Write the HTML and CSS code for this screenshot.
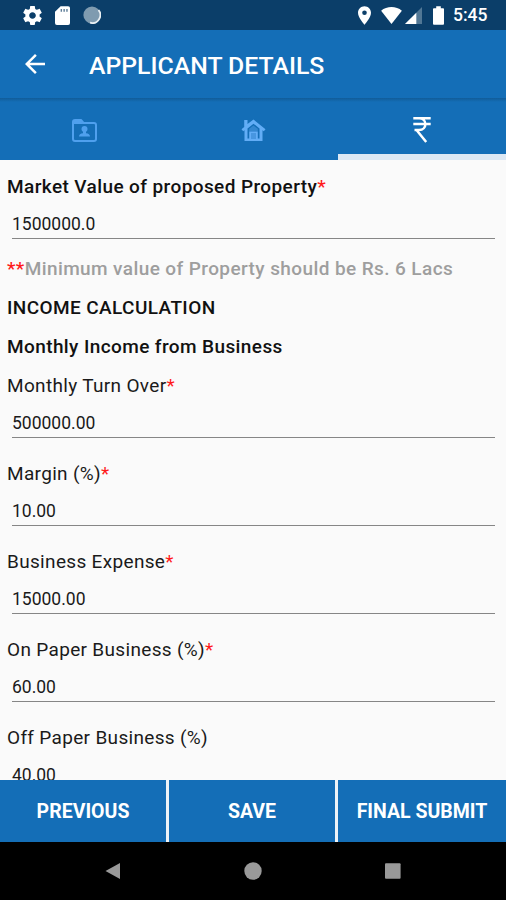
FILE: index.html
```html
<!DOCTYPE html>
<html lang="en">
<head>
  <meta charset="UTF-8" />
  <meta name="viewport" content="width=device-width, initial-scale=1.0"/>
  <title>Applicant Details</title>
  <link rel="stylesheet" href="styles.css">
</head>
<body>
  <div class="status-bar">
    <div class="status-left">
      <svg class="icon-gear" viewBox="2 2 20 20"><path fill="#fff" d="M19.43 12.98c.04-.32.07-.64.07-.98s-.03-.66-.07-.98l2.11-1.65c.19-.15.24-.42.12-.64l-2-3.46c-.12-.22-.39-.3-.61-.22l-2.49 1c-.52-.4-1.08-.73-1.69-.98l-.38-2.65C14.46 2.18 14.25 2 14 2h-4c-.25 0-.46.18-.49.42l-.38 2.65c-.61.25-1.17.59-1.69.98l-2.49-1c-.23-.09-.49 0-.61.22l-2 3.46c-.13.22-.07.49.12.64l2.11 1.65c-.04.32-.07.65-.07.98s.03.66.07.98l-2.11 1.65c-.19.15-.24.42-.12.64l2 3.46c.12.22.39.3.61.22l2.49-1c.52.4 1.08.73 1.69.98l.38 2.65c.03.24.24.42.49.42h4c.25 0 .46-.18.49-.42l.38-2.65c.61-.25 1.17-.59 1.69-.98l2.49 1c.23.09.49 0 .61-.22l2-3.46c.12-.22.07-.49-.12-.64l-2.11-1.65zM12 15.5c-1.93 0-3.5-1.57-3.5-3.5s1.57-3.5 3.5-3.5 3.5 1.57 3.5 3.5-1.57 3.5-3.5 3.5z"/></svg>
      <svg class="icon-sd" viewBox="0 0 16 20"><path fill="#fff" d="M6 0h8a2 2 0 0 1 2 2v16a2 2 0 0 1-2 2H2a2 2 0 0 1-2-2V6z"/><path fill="#5d7d98" d="M6 3h1.500v3H6zM9 3h1.500v3H9zM12 3h1.500v3H12z"/></svg>
      <svg class="icon-sync" viewBox="0 0 18 18"><circle cx="9" cy="9" r="8.600" fill="#7f9bb0"/><path d="M15.500 4a8 8 0 0 1-8.500 12.700" fill="none" stroke="#e9eff3" stroke-width="1.800"/></svg>
    </div>
    <div class="status-right">
      <svg class="icon-pin" viewBox="5 2 14 20"><path fill="#fff" d="M12 2C8.130 2 5 5.130 5 9c0 5.250 7 13 7 13s7-7.750 7-13c0-3.870-3.130-7-7-7zm0 9.500a2.500 2.500 0 0 1 0-5 2.500 2.500 0 0 1 0 5z"/></svg>
      <svg class="icon-wifi" viewBox="0 0 22 18"><path fill="#fff" d="M0 4C6-1.300 16-1.300 22 4L11 18z"/></svg>
      <svg class="icon-signal" viewBox="0 0 18 18"><path fill="#517795" d="M18 0v18H0z"/><path fill="#fff" d="M12 6v12H0z"/></svg>
      <svg class="icon-battery" viewBox="0 0 12 20"><path fill="#fff" d="M3.500 0h5v2H11a1 1 0 0 1 1 1v16a1 1 0 0 1-1 1H1a1 1 0 0 1-1-1V3a1 1 0 0 1 1-1h2.500z"/></svg>
      <span class="clock">5:45</span>
    </div>
  </div>

  <div class="header">
    <svg class="icon-back" viewBox="4 4 16 16"><path fill="#fff" d="M20 11H7.830l5.590-5.590L12 4l-8 8 8 8 1.410-1.410L7.830 13H20v-2z"/></svg>
    <h1 class="title">APPLICANT DETAILS</h1>
  </div>

  <div class="tabs">
    <div class="tab">
      <svg class="icon-folder" viewBox="0 0 25 23"><path fill="none" stroke="#4fa0ee" stroke-width="2" stroke-linejoin="round" d="M1 3a2 2 0 0 1 2-2h6l2.500 3H22a2 2 0 0 1 2 2v14a2 2 0 0 1-2 2H3a2 2 0 0 1-2-2z"/><path fill="#4fa0ee" d="M1 2h8l2.500 3H1z"/><circle cx="12.500" cy="10" r="3" fill="#4fa0ee"/><path fill="#4fa0ee" d="M11 12h3v2.300c2.500.2 4 1.200 4 3.200H7c0-2 1.500-3 4-3.200z"/></svg>
    </div>
    <div class="tab">
      <svg class="icon-home" viewBox="0 0 25 23"><path fill="#62adf6" d="M3.200 1h3.300v4L12.500.5l12 9.800-1.700 1.900-1.300-1V22h-18V11.200l-1.300 1L.5 10.300l2.700-2.200z"/><path fill="#146eb7" d="M6.500 19.500V9.500l6-4.800 6 4.800v10h-1.700v-7H8.200v7z"/><path fill="#62adf6" d="M8.200 9.800l4.300-3.300 4.300 3.300v2.700H8.200z" opacity=".4"/><path fill="#4796e0" d="M10 14h5v6h-5z"/></svg>
    </div>
    <div class="tab active">
      <svg class="icon-rupee" viewBox="0 0 18 26"><path fill="none" stroke="#fff" stroke-width="2.500" d="M.3 1.300h17.400M.3 7h17.400M6 1.300c8.500 0 8.500 11.700 0 11.700H1.500M3.500 13L13.200 25"/></svg>
    </div>
  </div>

  <div class="content">
    <div class="label bold">Market Value of proposed Property<span class="required">*</span></div>
    <div class="field first"><div class="value">1500000.0</div></div>
    <div class="label bold note"><span class="required">**</span>Minimum value of Property should be Rs. 6 Lacs</div>
    <div class="label bold">INCOME CALCULATION</div>
    <div class="label bold">Monthly Income from Business</div>
    <div class="label">Monthly Turn Over<span class="required">*</span></div>
    <div class="field"><div class="value">500000.00</div></div>
    <div class="label">Margin (%)<span class="required">*</span></div>
    <div class="field"><div class="value">10.00</div></div>
    <div class="label">Business Expense<span class="required">*</span></div>
    <div class="field"><div class="value">15000.00</div></div>
    <div class="label">On Paper Business (%)<span class="required">*</span></div>
    <div class="field"><div class="value">60.00</div></div>
    <div class="label">Off Paper Business (%)</div>
    <div class="field"><div class="value">40.00</div></div>
  </div>

  <div class="actions">
    <button class="action">PREVIOUS</button>
    <button class="action">SAVE</button>
    <button class="action last">FINAL SUBMIT</button>
  </div>

  <div class="nav-bar">
    <svg class="nav-icon" viewBox="0 0 18 18"><path fill="#999" d="M16 1v16L1.500 9z"/></svg>
    <svg class="nav-icon" viewBox="0 0 18 18"><circle cx="9" cy="9" r="8.700" fill="#999"/></svg>
    <svg class="nav-icon" viewBox="0 0 18 18"><rect x="1" y="1.200" width="15.600" height="15.600" rx="1" fill="#999"/></svg>
  </div>
</body>
</html>
```
FILE: styles.css
```css
* {
  box-sizing: border-box;
}
body {
  margin: 0;
  height: 900px;
  display: flex;
  flex-direction: column;
  overflow: hidden;
  background: #fafafa;
  font-family: Roboto, sans-serif;
  color: #1a1a1a;
}
svg {
  display: block;
  flex: none;
}
.status-bar {
  height: 30px;
  flex: none;
  display: flex;
  justify-content: space-between;
  align-items: center;
  padding: 0 18px 0 23px;
  background: #0b3e69;
}
.status-left,
.status-right {
  display: flex;
  align-items: center;
}
.icon-gear {
  width: 19px;
  height: 19px;
}
.icon-sd {
  width: 15px;
  height: 19px;
  margin-left: 13px;
}
.icon-sync {
  width: 18px;
  height: 18px;
  margin-left: 13px;
}
.icon-pin {
  width: 13px;
  height: 19px;
}
.icon-wifi {
  width: 21px;
  height: 17px;
  margin-left: 10px;
}
.icon-signal {
  width: 17px;
  height: 17px;
  margin-left: 3px;
}
.icon-battery {
  width: 11px;
  height: 19px;
  margin-left: 11px;
}
.clock {
  width: 35px;
  margin-left: 9px;
  color: #fff;
  font-size: 17.5px;
  font-weight: 500;
  line-height: 32px;
  white-space: nowrap;
}
.header {
  height: 68px;
  flex: none;
  display: flex;
  align-items: center;
  padding-left: 25px;
  background: #146eb7;
}
.icon-back {
  width: 20px;
  height: 20px;
}
.title {
  margin: 4px 0 0 44px;
  color: #fff;
  font-size: 24.8px;
  font-weight: 500;
  line-height: 30px;
}
.tabs {
  height: 62px;
  flex: none;
  display: flex;
  background: linear-gradient(#115c99, #146eb7 4px);
}
.tab {
  flex: 1 1 0;
  display: flex;
  justify-content: center;
  align-items: center;
  padding-top: 2px;
}
.tab.active {
  flex: 0 0 168px;
  padding-top: 8px;
  border-bottom: 6px solid #dce8f4;
}
.icon-folder,
.icon-home {
  width: 25px;
  height: 23px;
}
.icon-rupee {
  width: 18px;
  height: 26px;
}
.content {
  flex: 1;
  min-height: 0;
  overflow: hidden;
  padding: 8px 11px 0 7px;
}
.label {
  height: 39px;
  font-size: 19px;
  letter-spacing: 0.33px;
  line-height: 38px;
  white-space: nowrap;
}
.bold {
  color: #111;
  font-weight: 500;
  letter-spacing: 0.4px;
}
.note {
  color: #9e9e9e;
}
.required {
  color: #ff1a1a;
}
.field {
  height: 49px;
  padding-left: 5px;
}
.field.first {
  height: 43px;
}
.value {
  height: 32px;
  border-bottom: 1px solid #868686;
  font-size: 17.5px;
  line-height: 35px;
}
.actions {
  height: 62px;
  flex: none;
  display: flex;
  gap: 3px;
  background: #eef3f8;
}
.action {
  flex: 1 1 0;
  border: none;
  padding: 1px 0 0;
  background: #146eb7;
  color: #fff;
  font-family: inherit;
  font-size: 19.5px;
  font-weight: 700;
  white-space: nowrap;
}
.action.last {
  flex: 0 0 168px;
}
.nav-bar {
  height: 58px;
  flex: none;
  display: flex;
  justify-content: center;
  align-items: center;
  gap: 122px;
  background: #000;
}
.nav-icon {
  width: 18px;
  height: 18px;
}
```
